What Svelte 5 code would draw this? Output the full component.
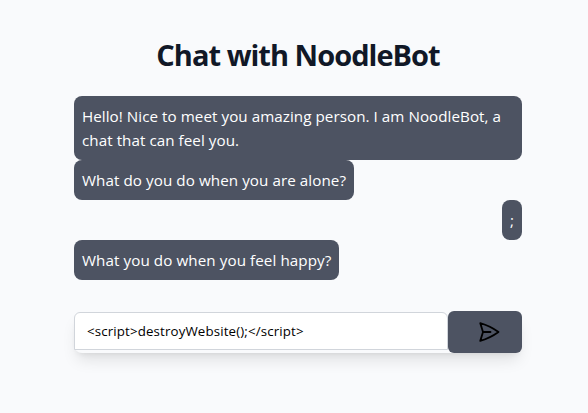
<script>
  const messages = [
    { from: 'bot', lines: ['Hello! Nice to meet you amazing person. I am NoodleBot, a', 'chat that can feel you.'], spacing: 0.05 },
    { from: 'bot', lines: ['What do you do when you are alone?'], spacing: 0.07 },
    { from: 'user', lines: [';'], spacing: 0 },
    { from: 'bot', lines: ['What you do when you feel happy?'], spacing: 0.08 }
  ];
  let draft = $state('<script>destroyWebsite();<\/script>');
</script>

<main>
  <h1>Chat with NoodleBot</h1>
  <div class="messages">
    {#each messages as message}
      <div class="message {message.from}" style="letter-spacing: {message.spacing}px">
        {#each message.lines as line}<div>{line}</div>{/each}
      </div>
    {/each}
  </div>
  <form onsubmit={(e) => e.preventDefault()}>
    <input type="text" aria-label="Message" spellcheck="false" bind:value={draft} />
    <button aria-label="Send">
      <svg width="24" height="24" viewBox="0 0 24 24" fill="none" stroke="#000" stroke-width="1.8" stroke-linecap="round" stroke-linejoin="round">
        <path d="M6 12L3.27 3.13A59.8 59.8 0 0 1 21.49 12 59.8 59.8 0 0 1 3.27 20.88L6 12Zm0 0h7.5" />
      </svg>
    </button>
  </form>
</main>

<style>
  :global(body) { background: #f9fafc; }
  main {
    box-sizing: border-box;
    width: 588px;
    min-height: 413px;
    padding: 37px 66px 0 74px;
    font-family: "Segoe UI", "Open Sans", "Noto Sans", sans-serif;
  }
  h1 {
    margin: 0 0 23px;
    text-align: center;
    white-space: nowrap;
    font-size: 29px;
    line-height: 36px;
    font-weight: 700;
    letter-spacing: -0.98px;
    color: #111827;
  }
  .messages { display: flex; flex-direction: column; align-items: flex-start; }
  .message {
    box-sizing: border-box;
    padding: 8px;
    border-radius: 8px;
    background: #4d5362;
    color: #fff;
    font-size: 15.2px;
    line-height: 24px;
    white-space: nowrap;
  }
  .message:first-child { width: 100%; }
  .message.user { align-self: flex-end; }
  form {
    display: flex;
    align-items: flex-start;
    height: 42px;
    margin-top: 31px;
    border-radius: 8px;
    box-shadow: 0 10px 15px -3px rgba(0, 0, 0, 0.1), 0 4px 6px -4px rgba(0, 0, 0, 0.1);
  }
  input {
    box-sizing: border-box;
    width: 374px;
    height: 38px;
    margin: 1px 0 0;
    padding: 8px 12px;
    border: 1px solid #d1d5db;
    border-radius: 6px 6px 0 0;
    background: #fff;
    font: 13.3px/20px "Segoe UI", "Open Sans", "Noto Sans", sans-serif;
    letter-spacing: 0.14px;
    color: #000;
    outline: none;
  }
  button {
    display: flex;
    align-items: center;
    justify-content: center;
    width: 74px;
    height: 42px;
    padding: 0 0 0 8px;
    border: 0;
    border-radius: 6px;
    background: #4d5362;
  }
</style>
